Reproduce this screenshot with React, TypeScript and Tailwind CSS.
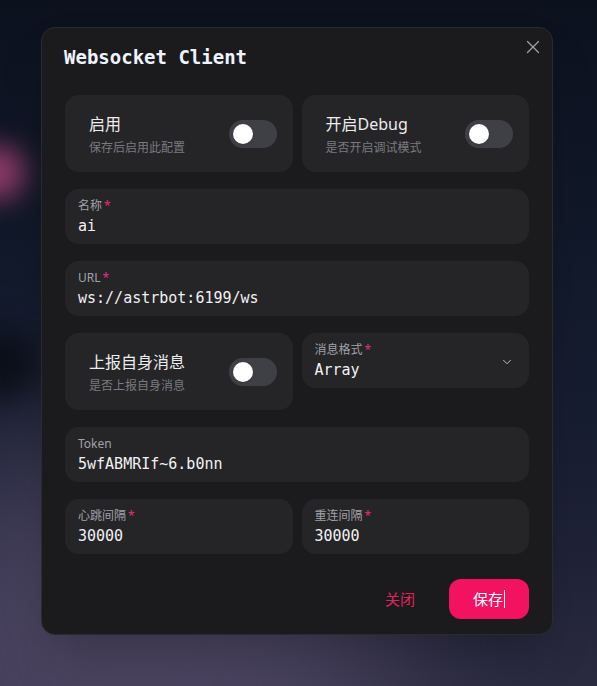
import React from "react";
import { X, ChevronDown } from "lucide-react";

const sans = { fontFamily: '"Noto Sans", "Noto Sans CJK SC", sans-serif' };
const mono = { fontFamily: '"DejaVu Sans Mono", "Noto Sans CJK SC", monospace' };

function Toggle() {
  return (
    <div className="flex h-[28px] w-[48px] shrink-0 items-center rounded-full bg-[#3f3f46] px-[4px]">
      <div className="h-[20px] w-[20px] rounded-full bg-white shadow" />
    </div>
  );
}

function ToggleCard({ title, sub }: { title: string; sub: string }) {
  return (
    <div className="flex h-[77px] min-w-0 items-center justify-between rounded-[14px] bg-[#252527] pl-[24px] pr-[16px]">
      <div className="flex flex-col gap-[4px] pt-[2px]">
        <div className="text-[16px] leading-[22px] text-[#ececee]" style={sans}>{title}</div>
        <div className="text-[12px] leading-[18px] text-[#7a7a80]" style={sans}>{sub}</div>
      </div>
      <Toggle />
    </div>
  );
}

function Field({ label, value, required, chevron }: { label: string; value: string; required?: boolean; chevron?: boolean }) {
  return (
    <div className="relative flex h-[55px] min-w-0 flex-col justify-center rounded-[14px] bg-[#252527] px-[13px]">
      <div className="flex items-center text-[12px] leading-[16px] text-[#a1a1aa]" style={sans}>
        <span>{label}</span>
        {required && <span className="ml-[2px] text-[#e0307a]">*</span>}
      </div>
      <div className="mt-[3px] text-[15px] leading-[19px] text-[#f1f1f3]" style={mono}>{value}</div>
      {chevron && (
        <ChevronDown className="absolute right-[15px] top-[22px] text-[#d4d4d8]" size={14} strokeWidth={1.5} />
      )}
    </div>
  );
}

export default function App() {
  return (
    <div className="relative h-[686px] w-[597px] overflow-hidden bg-[#0f1524]">
      <div className="absolute inset-0 bg-[linear-gradient(180deg,#0c111e_0%,#121a2b_40%,#1a1f33_70%,#2a2a40_100%)]" />
      <div className="absolute left-[-120px] top-[440px] h-[420px] w-[520px] rounded-full bg-[#524a68] opacity-80 blur-[80px]" />
      <div className="absolute left-[-30px] top-[145px] h-[55px] w-[55px] rounded-full bg-[#b0457a] opacity-80 blur-[14px]" />
      <div className="absolute left-[-40px] top-[330px] h-[70px] w-[80px] rounded-full bg-[#07090f] opacity-70 blur-[16px]" />

      <div className="relative ml-[41px] mt-[27px] h-[608px] w-[512px] rounded-[14px] border border-[#2b2b2e] bg-[#1b1b1d] shadow-2xl">
        <button className="absolute right-[8px] top-[8px] text-[#a1a1aa]">
          <X size={22} strokeWidth={1.4} />
        </button>
        <div className="px-[22px] pt-[15px] text-[19px] font-bold leading-[28px] text-[#eef4ff]" style={mono}>
          Websocket Client
        </div>
        <div className="mt-[24px] flex flex-col gap-[17px] px-[23px]">
          <div className="grid grid-cols-2 gap-x-[9px]">
            <ToggleCard title="启用" sub="保存后启用此配置" />
            <ToggleCard title="开启Debug" sub="是否开启调试模式" />
          </div>
          <Field label="名称" value="ai" required />
          <Field label="URL" value="ws://astrbot:6199/ws" required />
          <div className="grid grid-cols-2 items-start gap-x-[9px]">
            <ToggleCard title="上报自身消息" sub="是否上报自身消息" />
            <Field label="消息格式" value="Array" required chevron />
          </div>
          <Field label="Token" value="5wfABMRIf~6.b0nn" />
          <div className="grid grid-cols-2 gap-x-[9px]">
            <Field label="心跳间隔" value="30000" required />
            <Field label="重连间隔" value="30000" required />
          </div>
        </div>
        <div className="mt-[25px] flex justify-end gap-[9px] px-[23px]">
          <button className="flex h-[40px] w-[80px] items-center justify-center rounded-[12px] text-[15px] text-[#e0245e]" style={sans}>
            关闭
          </button>
          <button className="flex h-[40px] w-[80px] items-center justify-center rounded-[12px] bg-[#f31260] text-[15px] text-white" style={sans}>
            保存<span className="ml-[1px] inline-block h-[18px] w-[1px] bg-white" />
          </button>
        </div>
      </div>
    </div>
  );
}
